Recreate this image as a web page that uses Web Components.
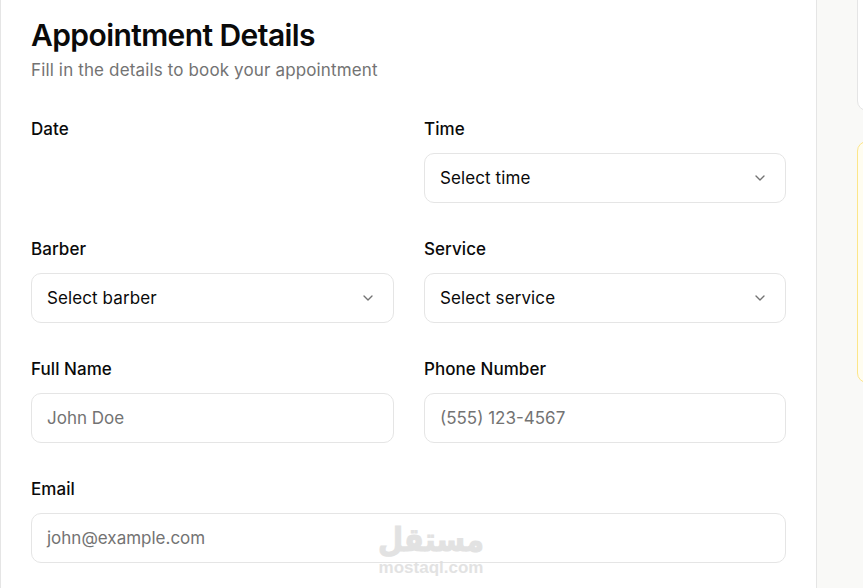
<!DOCTYPE html>
<html>
<head>
<meta charset="utf-8">
<title>Appointment Details</title>
<style>
html,body{margin:0;height:588px;overflow:hidden;background:#f9f9f7;font-family:Inter,"Liberation Sans",sans-serif}
</style>
</head>
<body>
<booking-page>
  <details-card title="Appointment Details" sub="Fill in the details to book your appointment">
    <form-field label="Date"></form-field>
    <form-field label="Time"><select-box text="Select time"></select-box></form-field>
    <form-field label="Barber"><select-box text="Select barber"></select-box></form-field>
    <form-field label="Service"><select-box text="Select service"></select-box></form-field>
    <form-field label="Full Name"><text-box text="John Doe"></text-box></form-field>
    <form-field label="Phone Number"><text-box text="(555) 123-4567"></text-box></form-field>
    <form-field label="Email" wide><text-box text="john@example.com"></text-box></form-field>
  </details-card>
  <side-panel slot="side"></side-panel>
</booking-page>
<mostaql-mark></mostaql-mark>
<script>
/* page frame: card on the left, summary column on the right */
class BookingPage extends HTMLElement {
  connectedCallback() {
    if (this.shadowRoot) return;
    const root = this.attachShadow({ mode: 'open' });
    root.innerHTML = `<style>
:host{display:flex;height:588px;overflow:hidden}
.main{flex:none;width:817px}
.side{flex:1;min-width:0}
</style><div class="main"><slot></slot></div><div class="side"><slot name="side"></slot></div>`;
  }
}
class DetailsCard extends HTMLElement {
  connectedCallback() {
    if (this.shadowRoot) return;
    const root = this.attachShadow({ mode: 'open' });
    root.innerHTML = `<style>
:host{display:block;box-sizing:border-box;height:588px;background:#fff;border-left:1px solid #e5e5e5;border-right:1px solid #e5e5e5;padding:17px 30px 0;color:#0a0a0a}
h1{margin:0;font-size:30px;line-height:36px;font-weight:600;letter-spacing:-.59px}
p{margin:5px 0 0;font-size:17px;line-height:24px;color:#737373;letter-spacing:.14px}
.grid{display:grid;grid-template-columns:363px 362px;column-gap:30px;row-gap:32px;margin-top:33px}
</style><h1></h1><p></p><div class="grid"><slot></slot></div>`;
    root.querySelector('h1').textContent = this.getAttribute('title');
    root.querySelector('p').textContent = this.getAttribute('sub');
    this.removeAttribute('title');
  }
}
class FormField extends HTMLElement {
  connectedCallback() {
    if (this.shadowRoot) return;
    const root = this.attachShadow({ mode: 'open' });
    root.innerHTML = `<style>
:host{display:flex;flex-direction:column;gap:10px}
:host([wide]){grid-column:1 / -1}
label{font-size:17px;line-height:28px;height:28px;font-weight:500;color:#0a0a0a;letter-spacing:.06px}
</style><label></label><slot></slot>`;
    root.querySelector('label').textContent = this.getAttribute('label');
  }
}
class SelectBox extends HTMLElement {
  connectedCallback() {
    if (this.shadowRoot) return;
    const root = this.attachShadow({ mode: 'open' });
    root.innerHTML = `<style>
:host{display:flex;align-items:center;justify-content:space-between;box-sizing:border-box;height:50px;padding:0 17px 0 15px;background:#fff;border:1px solid #e5e5e5;border-radius:10px;font-size:17px;line-height:24px;color:#0a0a0a;letter-spacing:.1px}
span{margin-top:-1px}
svg{display:block;flex:none}
</style><span></span><svg width="16" height="16" viewBox="0 0 24 24" fill="none" stroke="#737373" stroke-width="2" stroke-linecap="round" stroke-linejoin="round"><path d="m6 9 6 6 6-6"/></svg>`;
    root.querySelector('span').textContent = this.getAttribute('text');
  }
}
class TextBox extends HTMLElement {
  connectedCallback() {
    if (this.shadowRoot) return;
    const root = this.attachShadow({ mode: 'open' });
    root.innerHTML = `<style>
:host{display:flex;align-items:center;box-sizing:border-box;height:50px;padding:0 15px;background:#fff;border:1px solid #e5e5e5;border-radius:10px;font-size:17px;color:#737373}
</style><span></span>`;
    root.querySelector('span').textContent = this.getAttribute('text');
  }
}
class SidePanel extends HTMLElement {
  connectedCallback() {
    if (this.shadowRoot) return;
    const root = this.attachShadow({ mode: 'open' });
    root.innerHTML = `<style>
:host{display:flex;flex-direction:column;gap:30px;padding-left:40px;margin-top:-20px}
.box{box-sizing:border-box;width:60px;border-radius:10px}
.plain{height:131px;background:#fff;border:1px solid #e5e5e5}
.note{height:242px;background:#fffdf0;border:1px solid #fde68a}
</style><div class="box plain"></div><div class="box note"></div>`;
  }
}
/* site watermark, sits over the form */
class MostaqlMark extends HTMLElement {
  connectedCallback() {
    if (this.shadowRoot) return;
    const root = this.attachShadow({ mode: 'open' });
    root.innerHTML = `<style>
:host{position:absolute;left:373px;top:523px;width:116px;display:flex;flex-direction:column;align-items:center;color:#dedede;opacity:.85;pointer-events:none}
.ar{font:700 29px/36px "DejaVu Sans",sans-serif;-webkit-text-stroke:1px #dedede;transform:scaleY(1.12);transform-origin:50% 85%}
.en{font:700 17px/18px "Liberation Sans",sans-serif;margin-top:0}
</style><div class="ar" dir="rtl">مستقل</div><div class="en">mostaql.com</div>`;
  }
}
customElements.define('booking-page', BookingPage);
customElements.define('details-card', DetailsCard);
customElements.define('form-field', FormField);
customElements.define('select-box', SelectBox);
customElements.define('text-box', TextBox);
customElements.define('side-panel', SidePanel);
customElements.define('mostaql-mark', MostaqlMark);
</script>
</body>
</html>
